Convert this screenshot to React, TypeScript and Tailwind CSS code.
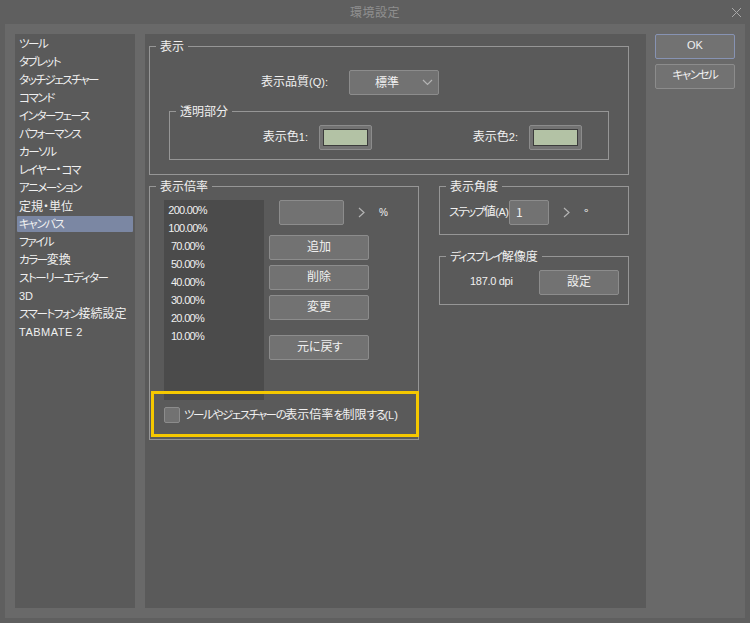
import type { ReactNode } from "react";

const menu = [
  "ツール",
  "タブレット",
  "タッチジェスチャー",
  "コマンド",
  "インターフェース",
  "パフォーマンス",
  "カーソル",
  "レイヤー・コマ",
  "アニメーション",
  "定規・単位",
  "キャンバス",
  "ファイル",
  "カラー変換",
  "ストーリーエディター",
  "3D",
  "スマートフォン接続設定",
  "TABMATE 2",
];

const zoomRates = ["200.00%", "100.00%", "70.00%", "50.00%", "40.00%", "30.00%", "20.00%", "10.00%"];

// The dialog font has narrow kana and a small latin, so each run gets its own size
function Jp({ text }: { text: string }) {
  const runs = text.split(/([ァ-ヶーぁ-ん]+|[\x20-\x7e]+)/).filter(Boolean);
  return (
    <>
      {runs.map((run, i) =>
        /^[ァ-ヶーぁ-ん]/.test(run) ? (
          <span key={i} className="text-[11.5px] tracking-[-1.4px]">{run}</span>
        ) : /^[\x20-\x7e]/.test(run) ? (
          <span key={i} className="font-['Liberation_Sans',sans-serif] text-[11px]">{run}</span>
        ) : (
          <span key={i}>{run}</span>
        ),
      )}
    </>
  );
}

function Group({ title, className, children }: { title: string; className: string; children: ReactNode }) {
  return (
    <div className={`relative border border-[#969696] ${className}`}>
      <span className="absolute -top-[9px] left-[6px] whitespace-nowrap bg-[#5a5a5a] px-[4px] leading-[16px] text-[#f0f0f0]">
        <Jp text={title} />
      </span>
      {children}
    </div>
  );
}

function Button({ children, className = "" }: { children: ReactNode; className?: string }) {
  return (
    <div className={`flex h-[25px] shrink-0 items-center justify-center rounded-[2px] border border-[#8c8c8c] bg-[#727272] pb-[3px] text-[#f0f0f0] ${className}`}>
      {children}
    </div>
  );
}

function Chevron() {
  return (
    <svg className="block" width="7" height="11" viewBox="0 0 7 11" fill="none" stroke="#b4b4b4" strokeWidth="1.2">
      <path d="M1 1l5 4.5L1 10" />
    </svg>
  );
}

function Swatch() {
  return (
    <div className="h-[25px] w-[53px] shrink-0 rounded-[2px] border border-[#8c8c8c] bg-[#727272] p-[3px]">
      <div className="h-full w-full border border-[#3c3c3c] bg-[#b3c2a5]" />
    </div>
  );
}

export default function App() {
  return (
    <div className="h-[623px] w-[750px] overflow-hidden bg-[#5f5f5f] font-['Noto_Sans_CJK_JP',sans-serif] text-[12px] [font-feature-settings:'palt']">
      {/* Title bar */}
      <div className="relative flex h-[24px] items-center justify-center text-[#8f8f8f]">
        <span className="tracking-[0.5px]">環境設定</span>
        <svg className="absolute right-[9px] top-[8px]" width="9" height="9" viewBox="0 0 9 9" stroke="#a8a8a8" strokeWidth="1">
          <path d="M0 0l9 9M9 0L0 9" />
        </svg>
      </div>

      <div className="mx-[5px] flex h-[594px] gap-[10px] bg-[#696969] p-[10px] text-[#f0f0f0]">
        {/* Sidebar */}
        <div className="flex w-[120px] flex-col bg-[#5a5a5a] px-[2px] pt-px">
          {menu.map((item) => (
            <div
              key={item}
              className={`my-px flex h-[16px] items-center whitespace-nowrap pb-px pl-[2px] ${item === "キャンバス" ? "rounded-[1px] bg-[#7b87a3]" : ""} ${item === "TABMATE 2" ? "tracking-[0.5px]" : ""}`}
            >
              <span>
                <Jp text={item} />
              </span>
            </div>
          ))}
        </div>

        {/* Main */}
        <div className="relative w-[501px] bg-[#5a5a5a] pl-[4px] pt-[12px]">
          <Group title="表示" className="h-[129px] w-[480px]">
            <div className="mt-[23px] flex items-center">
              <span className="w-[178px] pb-[3px] text-right"><Jp text="表示品質(Q):" /></span>
              <div className="ml-[21px] flex h-[25px] w-[90px] items-center justify-between rounded-[2px] border border-[#8c8c8c] bg-[#727272] pl-[25px] pr-[5px]">
                <span className="pb-[2px]">標準</span>
                <svg width="11" height="7" viewBox="0 0 11 7" fill="none" stroke="#b4b4b4" strokeWidth="1.2">
                  <path d="M1 1l4.5 4.5L10 1" />
                </svg>
              </div>
            </div>
            <Group title="透明部分" className="ml-[19px] mt-[16px] h-[49px] w-[440px]">
              <div className="mt-[13px] flex items-center">
                <span className="w-[138px] pb-[3px] text-right"><Jp text="表示色1:" /></span>
                <div className="ml-[11px]"><Swatch /></div>
                <span className="w-[146px] pb-[3px] text-right"><Jp text="表示色2:" /></span>
                <div className="ml-[11px]"><Swatch /></div>
              </div>
            </Group>
          </Group>

          <div className="mt-[11px] flex gap-[20px]">
            <Group title="表示倍率" className="h-[254px] w-[270px] pl-[14px] pt-[13px]">
              <div className="flex">
                <div className="h-[200px] w-[100px] shrink-0 bg-[#4b4b4b] pt-px font-['Liberation_Sans',sans-serif] text-[11px] tracking-[-0.7px]">
                  {zoomRates.map((rate) => (
                    <div key={rate} className="flex h-[18px] w-[47px] items-center justify-center">{rate}</div>
                  ))}
                </div>
                <div className="ml-[5px] flex w-[100px] shrink-0 flex-col gap-[5px]">
                  <div className="mb-[5px] ml-[10px] flex w-[130px] items-center">
                    <div className="h-[25px] w-[65px] shrink-0 rounded-[2px] border border-[#8c8c8c] bg-[#727272]" />
                    <span className="ml-[14px]"><Chevron /></span>
                    <span className="ml-[14px] font-['Liberation_Sans',sans-serif] text-[10px]">%</span>
                  </div>
                  <Button>追加</Button>
                  <Button>削除</Button>
                  <Button>変更</Button>
                  <Button className="mt-[10px]"><span>元に<span className="tracking-[-0.5px]">戻</span><Jp text="す" /></span></Button>
                </div>
              </div>
              <div className="mt-[5px] flex items-center gap-[4px]">
                <div className="h-[16px] w-[16px] shrink-0 rounded-[2px] border border-[#8c8c8c] bg-[#727272]" />
                <span className="whitespace-nowrap pb-[2px]"><Jp text="ツールやジェスチャーの表示倍率を制限する(L)" /></span>
              </div>
            </Group>

            <div className="flex w-[190px] flex-col gap-[21px]">
              <Group title="表示角度" className="h-[49px]">
                <div className="mt-[13px] flex items-center">
                  <span className="ml-[9px] w-[60px] shrink-0 whitespace-nowrap pb-[3px] tracking-[-0.5px]"><Jp text="ステップ値(A):" /></span>
                  <div className="flex h-[25px] w-[40px] shrink-0 items-center rounded-[2px] border border-[#8c8c8c] bg-[#727272] pb-[2px] pl-[6px]">1</div>
                  <span className="ml-[14px]"><Chevron /></span>
                  <span className="ml-[14px]">°</span>
                </div>
              </Group>
              <Group title="ディスプレイ解像度" className="h-[49px]">
                <div className="mt-[13px] flex items-center">
                  <span className="w-[99px] pb-[2px] pl-[30px] font-['Liberation_Sans',sans-serif] text-[11px] tracking-[-0.3px]">187.0 dpi</span>
                  <Button className="w-[80px]">設定</Button>
                </div>
              </Group>
            </div>
          </div>

          {/* Yellow highlight drawn over the screenshot */}
          <div className="absolute left-[6px] top-[357px] h-[46px] w-[268px] border-[3px] border-[#f5c800]" />
        </div>

        {/* Dialog buttons */}
        <div className="ml-[-1px] flex w-[80px] flex-col gap-[5px]">
          <Button className="border-[#8793b3] bg-[#7181a8] font-['Liberation_Sans',sans-serif] text-[11px] text-[#d5dbe8]">OK</Button>
          <Button><Jp text="キャンセル" /></Button>
        </div>
      </div>
    </div>
  );
}
